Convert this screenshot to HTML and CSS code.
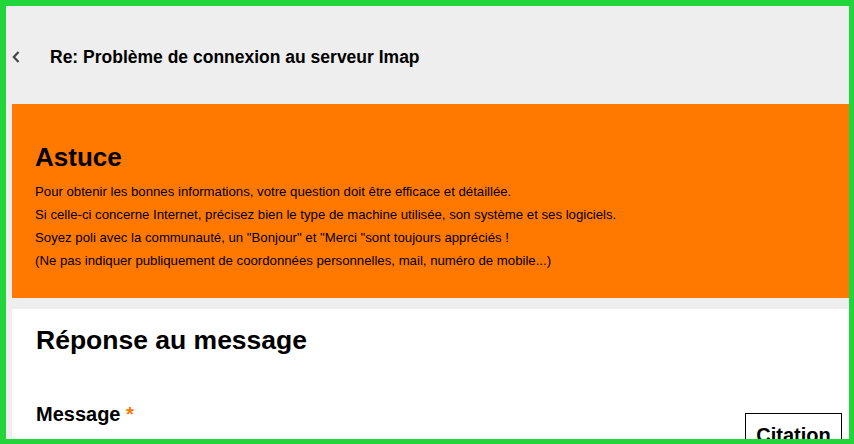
FILE: index.html
```html
<!DOCTYPE html>
<html lang="fr">
  <head>
    <meta charset="UTF-8" />
    <meta name="viewport" content="width=device-width, initial-scale=1.0" />
    <title>Re: Problème de connexion au serveur Imap</title>
    <link rel="stylesheet" href="styles.css">
  </head>
  <body>
    <div class="frame">
      <!-- Top bar -->
      <div class="topbar">
        <a class="back" href="#">
          <svg width="8" height="12" viewBox="0 0 8 12">
            <path d="M6.5 1 L1.8 6 L6.5 11" fill="none" stroke="#444" stroke-width="2.2" />
          </svg>
        </a>
        <h1 class="title">Re: Problème de connexion au serveur Imap</h1>
      </div>

      <!-- Tip -->
      <div class="tip">
        <h2 class="tip-title">Astuce</h2>
        <p>Pour obtenir les bonnes informations, votre question doit être efficace et détaillée.</p>
        <p>Si celle-ci concerne Internet, précisez bien le type de machine utilisée, son système et ses logiciels.</p>
        <p>Soyez poli avec la communauté, un "Bonjour" et "Merci "sont toujours appréciés !</p>
        <p>(Ne pas indiquer publiquement de coordonnées personnelles, mail, numéro de mobile...)</p>
      </div>

      <!-- Reply form -->
      <div class="reply">
        <h2 class="reply-title">Réponse au message</h2>
        <div class="field-row">
          <label class="label">Message <span class="req">*</span></label>
          <button class="quote-btn">Citation</button>
        </div>
      </div>
    </div>
  </body>
</html>
```

FILE: styles.css
```css
* {
  margin: 0;
  padding: 0;
  box-sizing: border-box;
}

body {
  font-family: "Liberation Sans", Arial, sans-serif;
  color: #000;
  overflow: hidden;
}

.frame {
  height: 444px;
  border-style: solid;
  border-color: #21d53a;
  border-width: 6px 5px 5px 6px;
  background: #eeeeee;
  padding-left: 6px;
  overflow: hidden;
}

.topbar {
  display: flex;
  align-items: center;
  height: 98px;
  padding-top: 4px;
}

.back {
  display: flex;
  width: 38px;
}

.title {
  font-size: 17.5px;
  font-weight: bold;
}

.tip {
  background: #ff7900;
  padding: 38px 23px 30px;
  height: 194px;
}

.tip-title {
  font-size: 26px;
  font-weight: bold;
  margin-bottom: 7px;
}

.tip p {
  font-size: 13.2px;
  line-height: 23px;
}

.reply {
  background: #fff;
  margin-top: 11px;
  padding: 16px 0 0 24px;
  height: 200px;
}

.reply-title {
  font-size: 26.5px;
  font-weight: bold;
  margin-bottom: 43px;
}

.field-row {
  display: flex;
  justify-content: space-between;
  align-items: flex-start;
}

.label {
  font-size: 20px;
  font-weight: bold;
  margin-top: 4px;
}

.req {
  color: #ff7900;
}

.quote-btn {
  font-family: inherit;
  font-size: 20px;
  font-weight: bold;
  line-height: 23px;
  background: #fff;
  border: 1px solid #000;
  width: 97px;
  height: 46px;
  padding-top: 10px;
  margin-right: 7px;
  margin-top: 14px;
  display: flex;
  justify-content: center;
  align-items: flex-start;
}
```
